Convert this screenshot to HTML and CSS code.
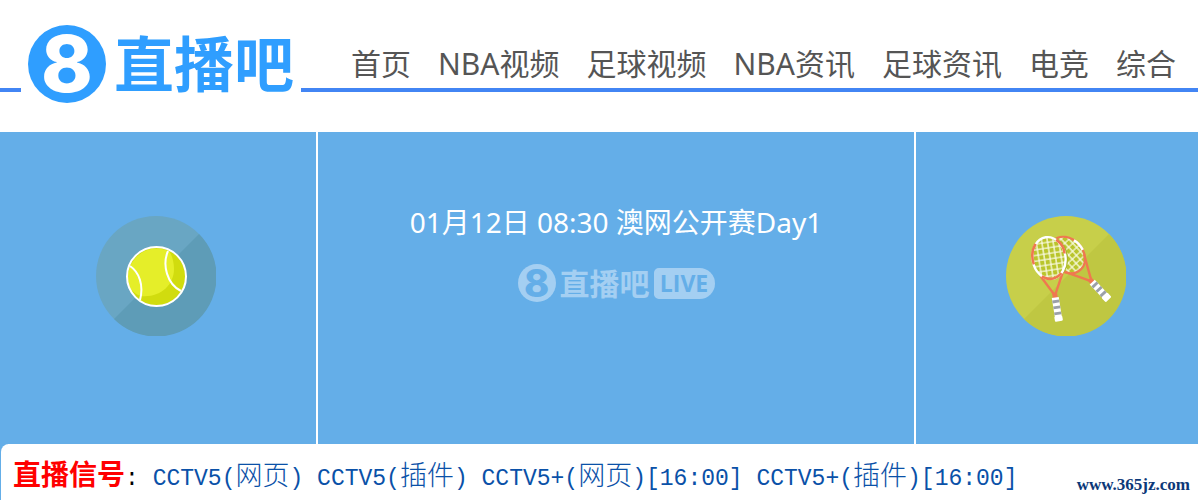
FILE: index.html
```
<!DOCTYPE html>
<html lang="zh-CN">
<head>
    <meta charset="UTF-8">
    <meta name="viewport" content="width=device-width, initial-scale=1.0">
    <title>直播吧</title>
    <link rel="stylesheet" href="styles.css">
</head>
<body>
    <header class="header">
        <a class="logo" href="#">
            <span class="logo-ball">8</span>
            <span class="logo-name">直播吧</span>
        </a>
        <nav class="nav">
            <a href="#">首页</a>
            <a href="#">NBA视频</a>
            <a href="#">足球视频</a>
            <a href="#">NBA资讯</a>
            <a href="#">足球资讯</a>
            <a href="#">电竞</a>
            <a href="#">综合</a>
        </nav>
    </header>

    <main>
        <section class="match">
            <div class="team">
                <svg class="team-icon" viewBox="0 0 120 120" aria-hidden="true">
                    <circle cx="60" cy="60" r="60" fill="#69a6c3"/>
                    <path d="M103 18A60 60 0 0 1 18 103Z" fill="#5e9cb7"/>
                    <circle cx="60.500" cy="60.500" r="29" fill="#d1dc0e"/>
                    <path d="M73 35A29 29 0 0 0 34 72C37 76 41 79 45 80C64 82 78 69 78 53C78 46 76 39 73 35Z" fill="#e5ee29"/>
                    <path d="M72 35C66 49 71 68 85 75M34 50C43 56 48 69 44 84" fill="none" stroke="#fff" stroke-width="2"/>
                    <circle cx="60.500" cy="60.500" r="29.500" fill="none" stroke="#fff" stroke-width="2"/>
                </svg>
            </div>
            <div class="info">
                <h1 class="title">01月12日 08:30 澳网公开赛Day1</h1>
                <div class="live">
                    <span class="live-ball">8</span>
                    <span class="live-name">直播吧</span>
                    <span class="live-tag">LIVE</span>
                </div>
            </div>
            <div class="team team-away">
                <svg class="team-icon" viewBox="0 0 120 120" aria-hidden="true">
                    <defs>
                        <pattern id="strings" width="5.600" height="5.600" patternUnits="userSpaceOnUse">
                            <path d="M0 1H6M1 0V6" stroke="#fafbe4" stroke-width="1.300"/>
                        </pattern>
                    </defs>
                    <circle cx="60" cy="60" r="60" fill="#c7cf4a"/>
                    <path d="M103 18A60 60 0 0 1 18 103Z" fill="#bfc742"/>
                    <!-- back racket -->
                    <g transform="translate(61 39) rotate(-43)">
                        <ellipse rx="16" ry="20" fill="#b9c52b"/>
                        <ellipse rx="16" ry="20" fill="url(#strings)"/>
                        <path d="M-13 11L0 36L13 11" fill="none" stroke="#ef7850" stroke-width="2.400"/>
                        <ellipse rx="16" ry="20" fill="none" stroke="#ef7850" stroke-width="2.200"/>
                        <path d="M-15-8Q-10-20-2-20M15-6Q17 0 15 7" fill="none" stroke="#fff" stroke-width="2.600"/>
                        <path d="M0 33V38" stroke="#ef7850" stroke-width="5"/>
                        <rect x="-3.500" y="37" width="7" height="22" fill="#fff"/>
                        <path d="M-3.500 41H3.500M-3.500 47H3.500M-3.500 53H3.500" stroke="#9ba0a8" stroke-width="2.800"/>
                        <rect x="-4" y="55" width="8" height="6" rx="1" fill="#fff"/>
                    </g>
                    <!-- front racket -->
                    <g transform="translate(43 42) rotate(-9)">
                        <ellipse cx="2" rx="17" ry="21" fill="#a8b62a"/>
                        <ellipse rx="16" ry="21" fill="#b9c52b"/>
                        <ellipse rx="16" ry="21" fill="url(#strings)"/>
                        <path d="M-11 17L0 38L11 17" fill="none" stroke="#ef7850" stroke-width="2.400"/>
                        <ellipse rx="16.500" ry="21" fill="none" stroke="#fff" stroke-width="2.400"/>
                        <path d="M-16 4Q-18-8-11-16M10-17Q17-10 16-2M-10 17Q0 25 10 17" fill="none" stroke="#ef7850" stroke-width="2.600"/>
                        <path d="M0 35V41" stroke="#ef7850" stroke-width="5"/>
                        <rect x="-3.500" y="40" width="7" height="22" fill="#fff"/>
                        <path d="M-3.500 44H3.500M-3.500 50H3.500M-3.500 56H3.500" stroke="#9ba0a8" stroke-width="2.800"/>
                        <rect x="-4" y="59" width="8" height="5" rx="1" fill="#fff"/>
                    </g>
                </svg>
            </div>
        </section>

        <section class="signal-wrap">
            <div class="signals">
                <strong class="signal-label">直播信号</strong><span class="colon">:</span>
                <a href="#">CCTV5(<span class="zh">网页</span>)</a>
                <a href="#">CCTV5(<span class="zh">插件</span>)</a>
                <a href="#">CCTV5+(<span class="zh">网页</span>)[16:00]</a>
                <a href="#">CCTV5+(<span class="zh">插件</span>)[16:00]</a>
            </div>
        </section>
    </main>

    <div class="watermark">www.365jz.com</div>
</body>
</html>
```
FILE: styles.css
```
* {
    box-sizing: border-box;
}
body {
    margin: 0;
    background-color: #fff;
    font-family: "Noto Sans", "Noto Sans CJK SC", sans-serif;
}
a {
    text-decoration: none;
}
.header {
    display: flex;
    height: 132px;
    padding-left: 21px;
    background: linear-gradient(#4285f4, #4285f4) 0 88px / 100% 4px no-repeat;
}
.logo {
    display: flex;
    align-items: center;
    gap: 8px;
    flex: none;
    width: 280px;
    height: 128px;
    padding-left: 7px;
    background-color: #fff;
    color: #2f9eff;
}
.logo-ball {
    flex: none;
    width: 78px;
    height: 78px;
    border-radius: 50%;
    background-color: #2f9eff;
    color: #fff;
    font: 800 78px/78px Inter, sans-serif;
    text-align: center;
}
.logo-name {
    padding-bottom: 6px;
    font: bold 60px/78px "Noto Sans CJK SC", sans-serif;
    white-space: nowrap;
}
.nav {
    display: flex;
    gap: 27px;
    height: 88px;
    padding: 40px 0 0 50px;
    white-space: nowrap;
}
.nav a {
    color: #555;
    font-size: 30px;
    line-height: 48px;
}
.match {
    display: grid;
    grid-template-columns: 318fr 596fr 284fr;
    height: 312px;
    background-color: #64aee8;
    color: #fff;
}
.team {
    display: flex;
    align-items: center;
    justify-content: center;
    padding: 0 4px 24px 0;
    border-right: 2px solid #fff;
}
.team-away {
    padding: 0 0 24px 18px;
    border-right: 0;
    border-left: 2px solid #fff;
}
.team-icon {
    width: 120px;
    height: 120px;
}
.info {
    display: flex;
    flex-direction: column;
    align-items: center;
    gap: 20px;
    padding-top: 68px;
}
.title {
    margin: 0;
    font-size: 28px;
    font-weight: normal;
    line-height: 44px;
    white-space: nowrap;
}
.live {
    display: flex;
    align-items: center;
    gap: 4px;
    color: #a4cff2;
}
.live-ball {
    width: 38px;
    height: 38px;
    border-radius: 50%;
    background-color: #a4cff2;
    color: #64aee8;
    font: 800 38px/38px Inter, sans-serif;
    text-align: center;
}
.live-name {
    padding-bottom: 2px;
    font: bold 30px/36px "Noto Sans CJK SC", sans-serif;
}
.live-tag {
    width: 61px;
    height: 31px;
    border-radius: 5px 16px 16px 5px;
    background-color: #a4cff2;
    color: #64aee8;
    font: bold 23px/31px "Open Sans", sans-serif;
    text-align: center;
}
.signal-wrap {
    padding-left: 1px;
    background: linear-gradient(#64aee8, #64aee8) 0 0 / 8px 100% no-repeat;
}
.signals {
    height: 56px;
    padding: 12px 0 0 12px;
    border-radius: 8px 0 0 0;
    background-color: #fff;
    font: 23px/44px "Liberation Mono", "Noto Sans CJK SC", monospace;
    white-space: nowrap;
}
.signals a {
    color: #0a51a8;
}
.signal-label {
    color: #f00;
    font-size: 28px;
}
.zh {
    font-size: 27px;
    font-weight: 300;
}
.watermark {
    position: absolute;
    right: 8px;
    bottom: 4px;
    color: #0c3878;
    font: bold 17px/22px "Liberation Serif", serif;
}
```
